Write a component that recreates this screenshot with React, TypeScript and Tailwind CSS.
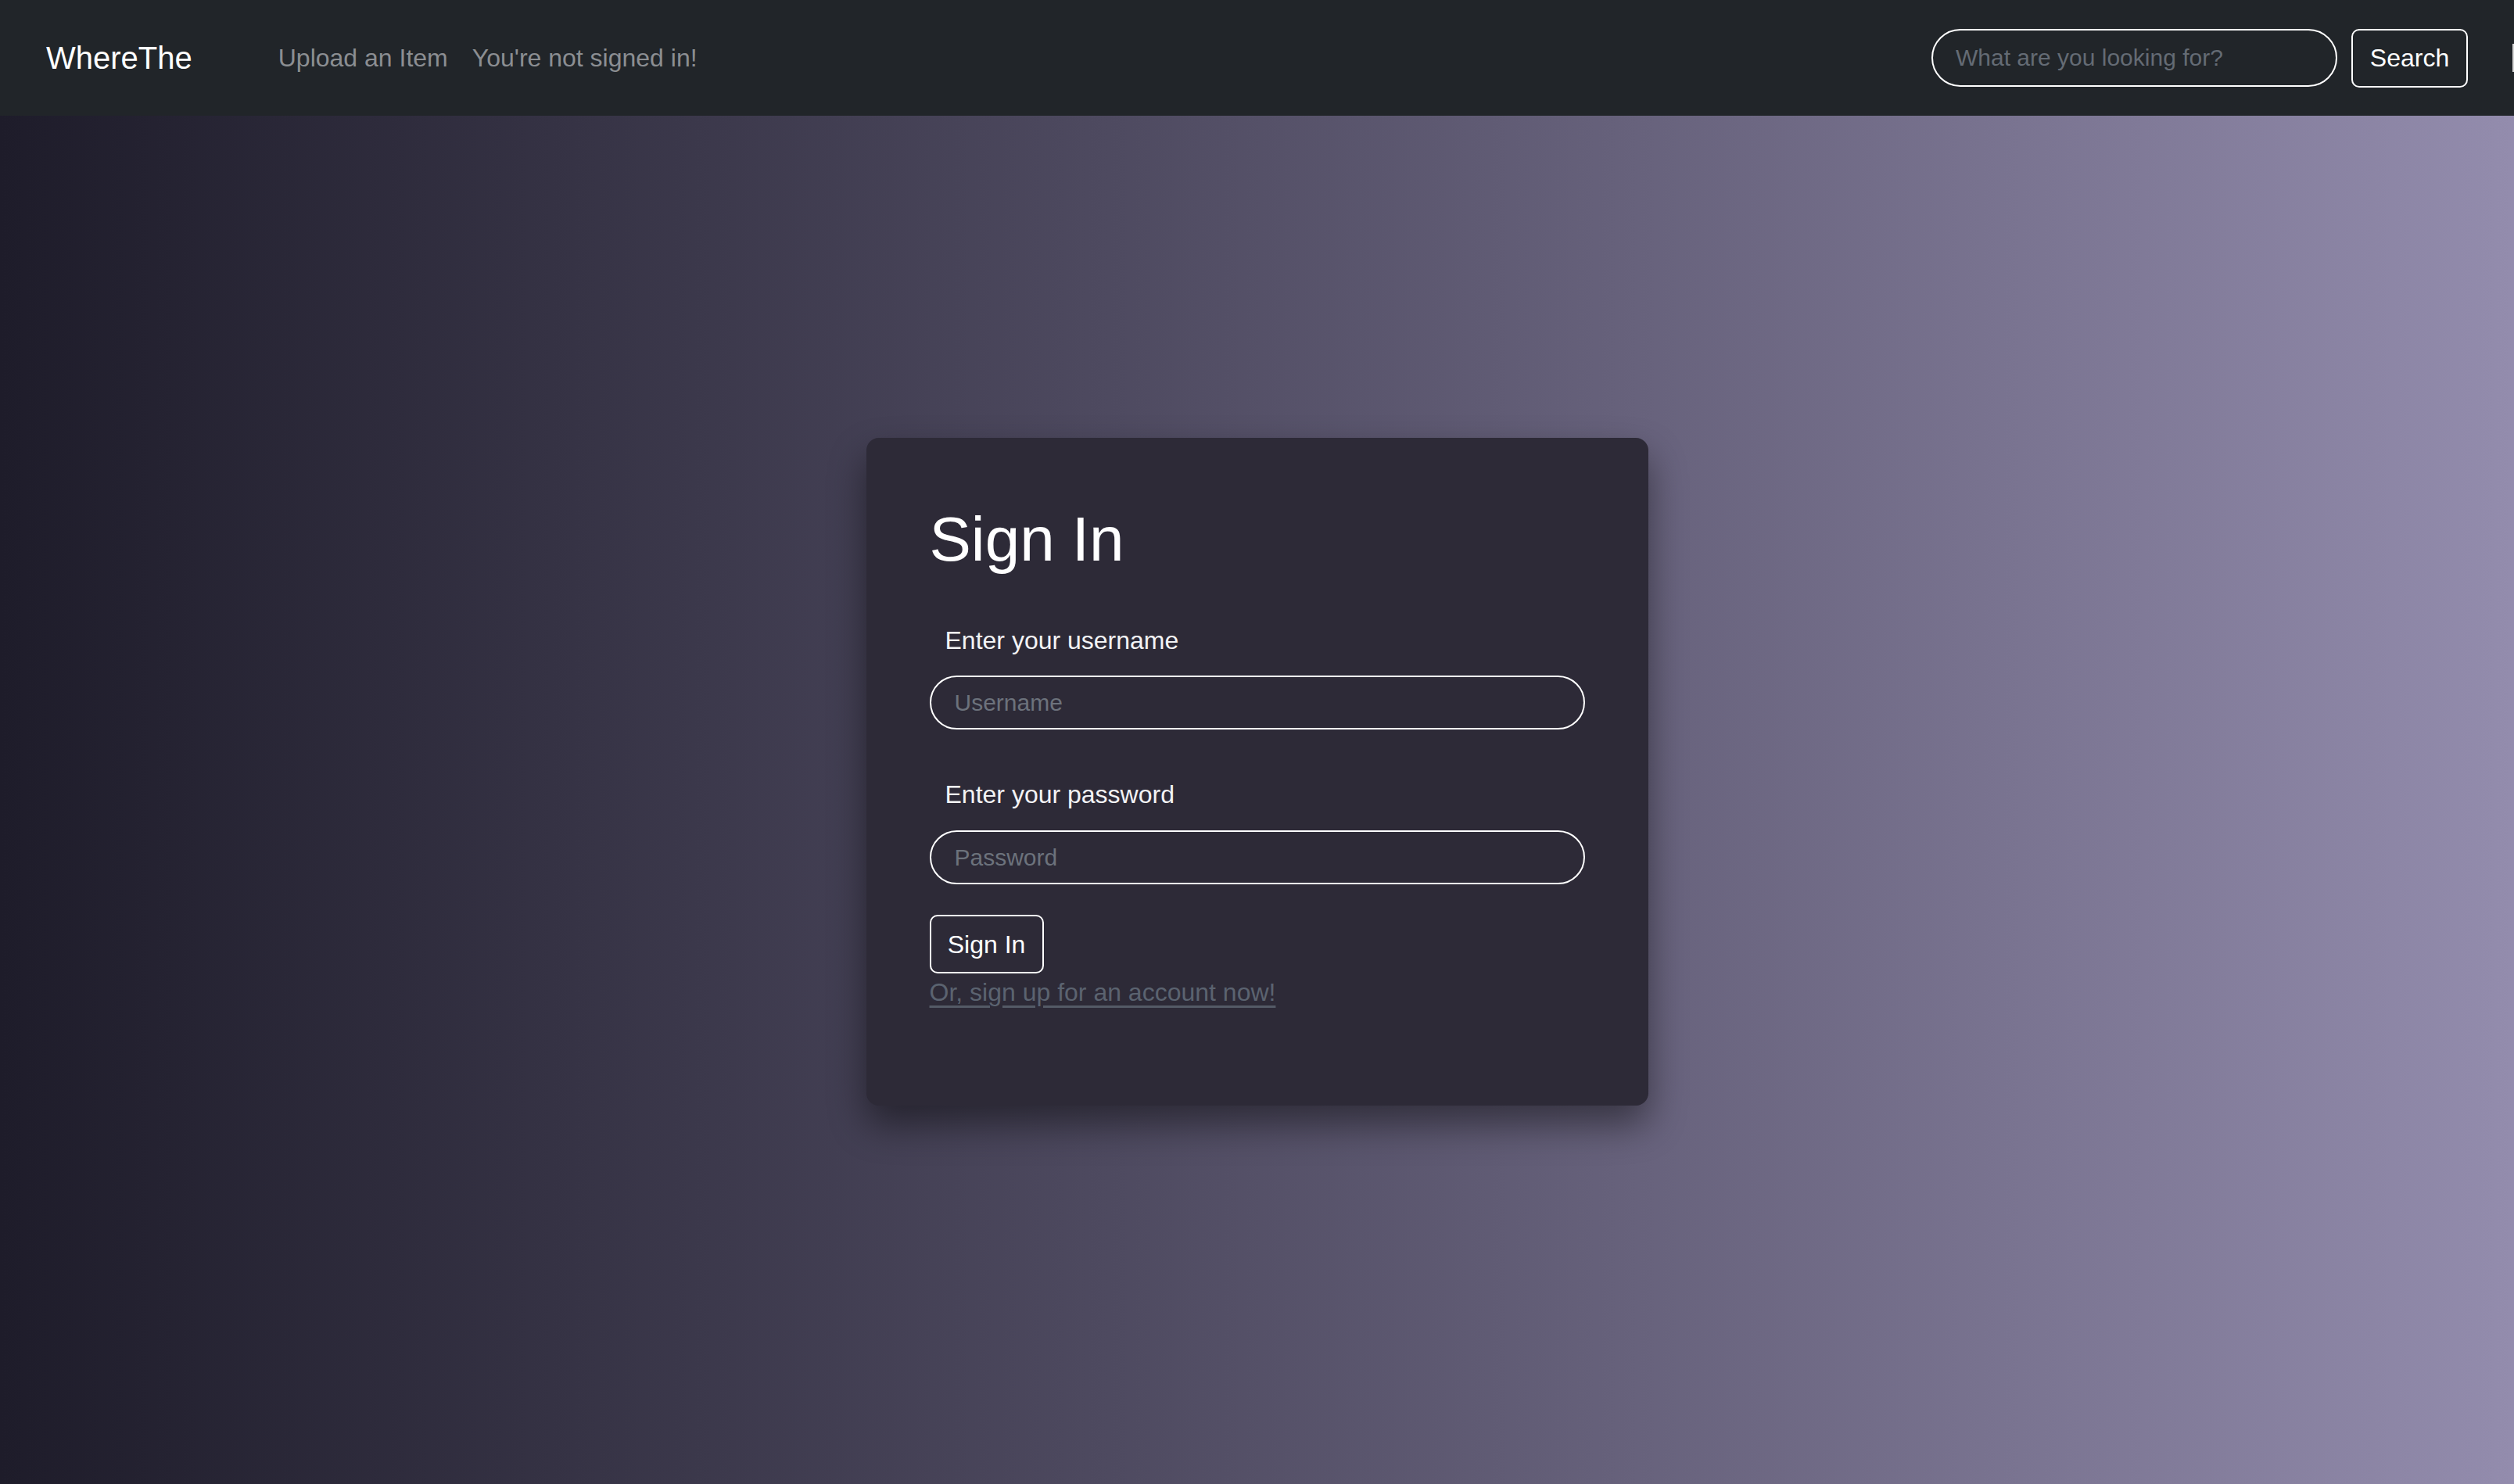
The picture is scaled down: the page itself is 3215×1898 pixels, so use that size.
export default function App() {
  return (
    <div className="flex h-[1898px] w-full flex-col overflow-hidden font-['Liberation_Sans',Arial,sans-serif]">
      {/* Navbar */}
      <nav className="flex h-[148px] shrink-0 items-center overflow-hidden bg-[#212529]">
        <a href="#" className="pl-[59px] text-[40px] leading-[60px] text-white">
          WhereThe
        </a>
        <div className="ml-[110px] flex items-center gap-[31px] text-[32px] leading-[48px] text-[#8b8e92]">
          <a href="#">Upload an Item</a>
          <a href="#">You're not signed in!</a>
        </div>
        <form className="ml-auto flex items-center" onSubmit={(e) => e.preventDefault()}>
          <input
            type="search"
            placeholder="What are you looking for?"
            className="h-[74px] w-[519px] rounded-full border-2 border-white bg-transparent px-[29px] text-[30px] text-white outline-none placeholder:text-[#646b74]"
          />
          <button
            type="submit"
            className="ml-[18px] h-[75px] w-[149px] rounded-[10px] border-2 border-white text-[32px] text-white"
          >
            Search
          </button>
          <div className="ml-[57px] h-[36px] w-[2px] bg-[#d4d4d4]" />
        </form>
      </nav>

      {/* Main */}
      <main className="flex flex-1 justify-center bg-linear-to-r from-[#1e1c2a] to-[#938cad] pt-[412px]">
        <div className="h-fit w-[1000px] rounded-[16px] bg-[#2d2a37] px-[81px] pt-[82px] pb-[121px] shadow-[0_24px_48px_rgba(0,0,0,0.45)]">
          <h1 className="text-[80px] leading-[96px] font-medium text-white">Sign In</h1>

          <label className="mt-[57px] block pl-[20px] text-[32px] leading-[48px] text-[#f3f3f5]">
            Enter your username
          </label>
          <input
            type="text"
            placeholder="Username"
            className="mt-[21px] block h-[69px] w-full rounded-full border-2 border-white bg-transparent px-[30px] text-[30px] text-white outline-none placeholder:text-[#6c727c]"
          />

          <label className="mt-[59px] block pl-[20px] text-[32px] leading-[48px] text-[#f3f3f5]">
            Enter your password
          </label>
          <input
            type="password"
            placeholder="Password"
            className="mt-[22px] block h-[69px] w-full rounded-full border-2 border-white bg-transparent px-[30px] text-[30px] text-white outline-none placeholder:text-[#6c727c]"
          />

          <button
            type="button"
            className="mt-[39px] block h-[75px] w-[146px] rounded-[10px] border-2 border-white text-[32px] text-white"
          >
            Sign In
          </button>
          <a
            href="#"
            className="block w-fit text-[32px] leading-[48px] text-[#5b6370] underline decoration-[#545a66] underline-offset-[6px]"
          >
            Or, sign up for an account now!
          </a>
        </div>
      </main>
    </div>
  );
}
